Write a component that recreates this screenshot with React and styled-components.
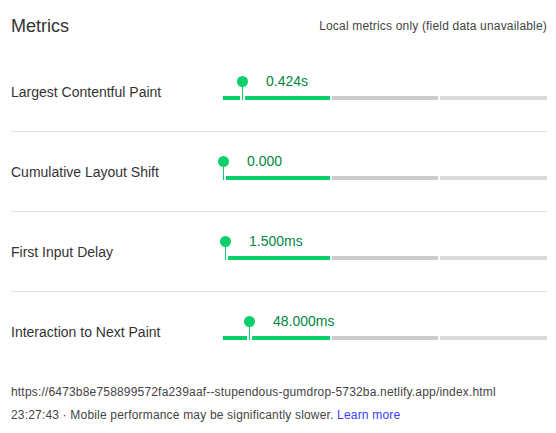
import styled, { createGlobalStyle } from "styled-components";

const metrics = [
  { name: "Largest Contentful Paint", value: "0.424s", pos: 19 },
  { name: "Cumulative Layout Shift", value: "0.000", pos: 0 },
  { name: "First Input Delay", value: "1.500ms", pos: 2 },
  { name: "Interaction to Next Paint", value: "48.000ms", pos: 26 },
];

export default function App() {
  return (
    <>
      <GlobalStyle />
      <Container>
        <Header>
          <h1>Metrics</h1>
          <span>Local metrics only (field data unavailable)</span>
        </Header>
        {metrics.map((m) => (
          <Row key={m.name}>
            <Label>{m.name}</Label>
            <Meter>
              <Bar>
                <Segment $color="#0cce6b" />
                <Segment $color="#cccccc" />
                <Segment $color="#dadada" />
              </Bar>
              <Pin style={{ left: m.pos }}>
                <Dot />
              </Pin>
              <Value style={{ left: m.pos + 24 }}>{m.value}</Value>
            </Meter>
          </Row>
        ))}
        <Footer>
          <div>
            https://6473b8e758899572fa239aaf--stupendous-gumdrop-5732ba.netlify.app/index.html
          </div>
          <div>
            23:27:43 · Mobile performance may be significantly slower.{" "}
            <a href="#">Learn more</a>
          </div>
        </Footer>
      </Container>
    </>
  );
}

const GlobalStyle = createGlobalStyle`
  body {
    margin: 0;
    background: #fff;
    font-family: "Liberation Sans", Arial, sans-serif;
    color: #333;
  }
`;

const Container = styled.div`
  width: 556px;
  box-sizing: border-box;
  padding: 0 9px 0 11px;
`;

const Header = styled.header`
  height: 52px;
  display: flex;
  align-items: center;
  justify-content: space-between;
  h1 {
    margin: 0;
    font-size: 18px;
    font-weight: 400;
    color: #333;
  }
  span {
    font-size: 12px;
    letter-spacing: 0.18px;
    color: #444;
  }
`;

const Row = styled.section`
  height: 80px;
  box-sizing: border-box;
  display: flex;
  align-items: flex-end;
  padding-bottom: 31px;
  border-bottom: 1px solid #e0e0e0;
  &:last-of-type {
    border-bottom-color: transparent;
  }
`;

const Label = styled.div`
  width: 212px;
  flex: none;
  font-size: 14px;
  line-height: 16px;
  color: #333;
`;

const Meter = styled.div`
  position: relative;
  flex: 1;
  height: 24px;
  display: flex;
  align-items: flex-end;
`;

const Bar = styled.div`
  flex: 1;
  display: flex;
  gap: 2px;
  height: 4px;
`;

const Segment = styled.div`
  flex: 1;
  background: ${({ $color }) => $color};
`;

const Pin = styled.div`
  position: absolute;
  top: 0;
  bottom: 0;
  width: 1px;
  &::before {
    content: "";
    position: absolute;
    left: -2px;
    bottom: 0;
    width: 5px;
    height: 4px;
    background: #fff;
  }
  &::after {
    content: "";
    position: absolute;
    left: 0;
    top: 6px;
    bottom: 0;
    width: 1px;
    background: #0cce6b;
  }
`;

const Dot = styled.span`
  position: absolute;
  left: -5px;
  top: 0;
  width: 11px;
  height: 11px;
  border-radius: 50%;
  background: #0cce6b;
`;

const Value = styled.span`
  position: absolute;
  top: -3px;
  font-size: 14px;
  line-height: 16px;
  color: #018642;
  white-space: nowrap;
`;

const Footer = styled.footer`
  padding-top: 9px;
  font-size: 12px;
  line-height: 22.5px;
  letter-spacing: 0.18px;
  color: #444;
  a {
    color: #3740ff;
    text-decoration: none;
  }
`;
